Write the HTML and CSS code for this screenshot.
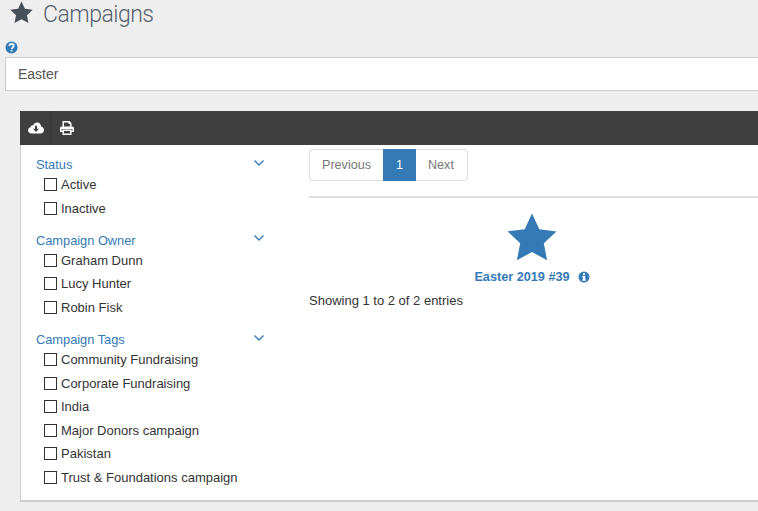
FILE: index.html
```html
<!DOCTYPE html>
<html lang="en">
<head>
<meta charset="utf-8">
<title>Campaigns</title>
<link rel="stylesheet" href="styles.css">
</head>
<body>
<div class="page">
  <h1 class="title">
    <svg class="title-star" viewBox="0 0 24 24"><path d="M12 .6l3.500 7.500 8.200 1-6 5.700 1.600 8.200L12 19l-7.300 4 1.600-8.200-6-5.700 8.200-1z"/></svg>
    <span>Campaigns</span>
  </h1>
  <svg class="help" viewBox="0 0 14 14"><circle cx="7" cy="7" r="6.500"/><path class="help-q" d="M4.700 5.300C4.900 3.900 5.900 3.200 7.100 3.200c1.300 0 2.300.8 2.300 2 0 1-.6 1.500-1.200 1.900-.5.300-.7.500-.7 1v.4" /><rect class="help-dot" x="6.100" y="9.500" width="1.800" height="1.700"/></svg>
  <div class="search">Easter</div>
  <section class="panel">
    <div class="toolbar">
      <div class="tool tool-first">
        <svg class="ico-cloud" viewBox="0 0 16 12"><path class="white" d="M3.500 11.500C1.500 11.500 0 10.100 0 8.300c0-1.500 1-2.700 2.400-3.100C2.800 3.900 4 3.100 5.300 3.300 6 1.400 7.500.4 9.200.5c2.200.1 3.900 1.900 3.900 4 1.700.3 2.900 1.700 2.900 3.400 0 2-1.600 3.600-3.600 3.600z"/><path class="dark" d="M7 3.800h2v3h2L8 9.900 5 6.800h2z"/></svg>
      </div>
      <div class="tool">
        <svg class="ico-print" viewBox="0 0 14 14"><path class="white" fill-rule="evenodd" d="M2.500 0h7L11.500 2v3.500h.7c1 0 1.800.8 1.800 1.800v3.700h-2.500v3h-9v-3H0V7.300c0-1 .8-1.800 1.800-1.800h.7zM4 1.500v4h6V3H8.500V1.500zM1.500 8v1.500h1V8.500h9v1h1V8zM4 10v2.500h6V10z"/></svg>
      </div>
    </div>
    <div class="panel-body">
      <aside class="filters">
        <div class="group">
          <div class="group-head">Status<svg class="chev" viewBox="0 0 12 8"><path d="M1.500 1.500L6 6l4.500-4.500"/></svg></div>
          <label class="opt"><i class="box"></i>Active</label>
          <label class="opt"><i class="box"></i>Inactive</label>
        </div>
        <div class="group">
          <div class="group-head">Campaign Owner<svg class="chev" viewBox="0 0 12 8"><path d="M1.500 1.500L6 6l4.500-4.500"/></svg></div>
          <label class="opt"><i class="box"></i>Graham Dunn</label>
          <label class="opt"><i class="box"></i>Lucy Hunter</label>
          <label class="opt"><i class="box"></i>Robin Fisk</label>
        </div>
        <div class="group group-tags">
          <div class="group-head">Campaign Tags<svg class="chev" viewBox="0 0 12 8"><path d="M1.500 1.500L6 6l4.500-4.500"/></svg></div>
          <label class="opt"><i class="box"></i>Community Fundraising</label>
          <label class="opt"><i class="box"></i>Corporate Fundraising</label>
          <label class="opt"><i class="box"></i>India</label>
          <label class="opt"><i class="box"></i>Major Donors campaign</label>
          <label class="opt"><i class="box"></i>Pakistan</label>
          <label class="opt"><i class="box"></i>Trust &amp; Foundations campaign</label>
        </div>
      </aside>
      <main class="results">
        <nav class="pager">
          <a class="pg pg-first">Previous</a><a class="pg pg-active">1</a><a class="pg pg-last">Next</a>
        </nav>
        <hr class="rule">
        <div class="card">
          <svg class="card-star" viewBox="0 0 50 48"><path d="M25 .5l7.300 15.700 17.200 2.200-12.700 11.800 3.300 17.100L25 39l-15.100 8.300 3.300-17.100L.5 18.400l17.200-2.200z"/></svg>
          <div class="card-name">Easter 2019 #39<svg class="info" viewBox="0 0 12 12"><circle cx="6" cy="6" r="5.500"/><rect class="info-i" x="5" y="2.200" width="2" height="1.800"/><path class="info-i" d="M4.300 5h2.900v3.500H8v1.200H4.200V8.500H5V6.200h-.7z"/></svg></div>
        </div>
        <div class="count">Showing 1 to 2 of 2 entries</div>
      </main>
    </div>
  </section>
</div>
</body>
</html>
```
FILE: styles.css
```css
* { box-sizing: border-box; }
html, body { margin: 0; height: 100%; }
body {
  background: #eeeeee;
  color: #333;
  font-family: "Liberation Sans", Arial, sans-serif;
  font-size: 13px;
  overflow: hidden;
}
.page { width: 758px; height: 511px; padding-left: 5px; overflow: hidden; }
.title {
  display: flex;
  align-items: center;
  gap: 10px;
  height: 30px;
  margin: 0 0 0 5px;
  padding-bottom: 2px;
  font-family: Roboto, sans-serif;
  font-weight: 300;
  font-size: 23px;
  letter-spacing: -.5px;
  color: #56616e;
}
.title-star { width: 23px; height: 23px; fill: #474f59; flex: none; margin-bottom: 3px; }
.help { display: block; width: 13px; height: 13px; margin-top: 11px; }
.help circle { fill: #337ab7; }
.help-q { fill: none; stroke: #fff; stroke-width: 1.900; }
.help-dot { fill: #fff; }
.search {
  height: 34px;
  width: 900px;
  margin-top: 3px;
  padding-left: 12px;
  border: 1px solid #cccccc;
  background: #fff;
  font-size: 14px;
  line-height: 32px;
  color: #555;
}
.panel {
  width: 900px;
  height: 391px;
  margin: 20px 0 0 15px;
  background: #fff;
  border-left: 1px solid #cccccc;
  border-bottom: 2px solid #cccccc;
}
.toolbar {
  display: flex;
  height: 34px;
  margin-left: -1px;
  background: #3f3f3f;
}
.tool { display: flex; align-items: center; justify-content: center; width: 31px; height: 34px; }
.tool-first { padding-left: 2px; border-right: 1px solid #373737; }
.ico-cloud { width: 16px; height: 12px; }
.ico-print { width: 14px; height: 14px; }
.white { fill: #fff; }
.dark { fill: #3f3f3f; }
.panel-body { display: flex; }
.filters { width: 288px; flex: none; padding: 10px 0 0 15px; }
.group { margin-bottom: 10.500px; }
.group-tags { margin-top: 11px; }
.group-head {
  display: flex;
  justify-content: space-between;
  align-items: flex-start;
  width: 229px;
  height: 18px;
  font-size: 12.800px;
  line-height: 19px;
  color: #337ab7;
}
.chev { width: 12px; height: 8px; margin-top: 3.500px; fill: none; stroke: #337ab7; stroke-width: 1.400; }
.opt {
  display: flex;
  align-items: center;
  height: 23.500px;
  padding-left: 8px;
  font-size: 13px;
  color: #333;
}
.box { width: 13px; height: 13px; margin-right: 4px; border: 1px solid #333; background: #fff; flex: none; }
.results { flex: 1; padding-top: 4px; }
.pager { display: flex; height: 32px; line-height: 30px; }
.pg { height: 32px; padding: 0 12px; border: 1px solid #ddd; background: #fff; color: #777; font-size: 12.600px; }
.pg-first { width: 74px; border-radius: 4px 0 0 4px; border-right: 0; }
.pg-active { width: 33px; padding: 0; text-align: center; background: #337ab7; border-color: #337ab7; color: #fff; }
.pg-last { width: 52px; border-radius: 0 4px 4px 0; border-left: 0; }
.rule { height: 2px; margin: 15px 0 0; border: 0; background: #dddddd; }
.card { width: 446px; display: flex; flex-direction: column; align-items: center; padding-top: 15px; }
.card-star { display: block; width: 50px; height: 48px; fill: #337ab7; }
.card-name {
  display: flex;
  align-items: center;
  gap: 8px;
  height: 20px;
  margin-top: 6px;
  font-size: 12.700px;
  font-weight: bold;
  color: #337ab7;
}
.info { width: 12px; height: 12px; }
.info circle { fill: #337ab7; }
.info-i { fill: #fff; }
.count { margin-top: 5px; font-size: 13px; line-height: 18px; color: #333; }
```
